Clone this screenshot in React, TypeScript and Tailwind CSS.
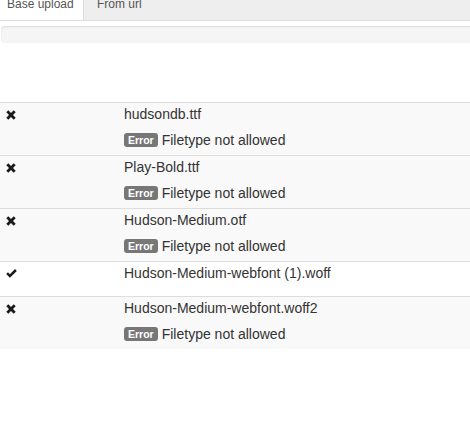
type UploadFile = {
  name: string;
  ok: boolean;
  error?: string;
};

const files: UploadFile[] = [
  { name: "hudsondb.ttf", ok: false, error: "Filetype not allowed" },
  { name: "Play-Bold.ttf", ok: false, error: "Filetype not allowed" },
  { name: "Hudson-Medium.otf", ok: false, error: "Filetype not allowed" },
  { name: "Hudson-Medium-webfont (1).woff", ok: true },
  { name: "Hudson-Medium-webfont.woff2", ok: false, error: "Filetype not allowed" },
];

function RemoveIcon() {
  return (
    <svg width="10" height="10" viewBox="0 0 10 10" className="block">
      <path
        d="M0.3 2.3 L2.3 0.3 L5 3 L7.7 0.3 L9.7 2.3 L7 5 L9.7 7.7 L7.7 9.7 L5 7 L2.3 9.7 L0.3 7.7 L3 5 Z"
        fill="#1a1a1a"
      />
    </svg>
  );
}

function OkIcon() {
  return (
    <svg width="11" height="9" viewBox="0 0 11 9" className="block">
      <path d="M0.2 5.1 L2 3.3 L3.9 5.2 L9 0.1 L10.8 1.9 L3.9 8.8 Z" fill="#1a1a1a" />
    </svg>
  );
}

function FileRow({ file, striped }: { file: UploadFile; striped: boolean }) {
  return (
    <div
      className={`flex border-t border-[#ddd] ${striped ? "bg-[#f9f9f9]" : "bg-white"} ${
        file.ok ? "pt-[1px] pb-[13px]" : "pt-[1px] pb-[5px]"
      }`}
    >
      <div className="w-[124px] shrink-0 pl-[6px] pt-[6px]">
        {file.ok ? <OkIcon /> : <RemoveIcon />}
      </div>
      <div className="flex-1">
        <p className="h-5 whitespace-nowrap leading-5 text-[#333]">{file.name}</p>
        {file.error && (
          <div className="mt-[6px] flex h-5 items-center whitespace-nowrap leading-5 text-[#333]">
            <span className="mr-[4px] rounded-[3px] bg-[#777] px-[4px] pt-[2px] pb-[2px] text-[10.5px] font-bold leading-none text-white">
              Error
            </span>
            {file.error}
          </div>
        )}
      </div>
    </div>
  );
}

export default function App() {
  return (
    <div className="w-full overflow-hidden bg-white font-['Liberation_Sans',Arial,sans-serif] text-[14px]">
      <div className="w-[490px]">
        {/* tabs */}
        <div className="-mt-[6px] flex h-[27px] border-b border-[#ddd] text-[12px]">
          <div className="w-[83px] whitespace-nowrap bg-white pl-[7px] leading-5 text-[#555]">
            Base upload
          </div>
          <div className="flex-1 whitespace-nowrap border-l border-[#ddd] bg-[#eee] pl-[13px] leading-5 text-[#555]">
            From url
          </div>
        </div>

        {/* progress */}
        <div className="ml-[1px] mt-[5px] h-[17px] rounded-[4px] bg-[#f5f5f5] shadow-[inset_0_1px_2px_rgba(0,0,0,0.1)]" />

        {/* files */}
        <div className="mt-[59px]">
          {files.map((f) => (
            <FileRow key={f.name} file={f} striped={!f.ok} />
          ))}
        </div>
      </div>
    </div>
  );
}
